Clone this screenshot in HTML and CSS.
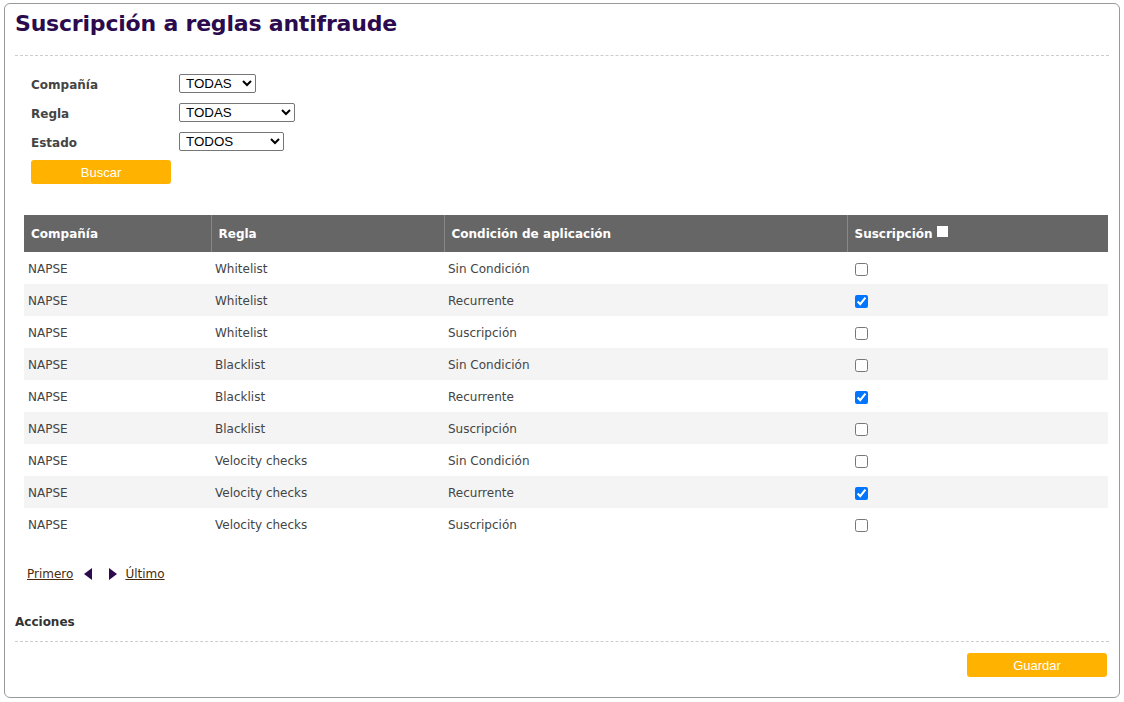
FILE: index.html
```html
<!DOCTYPE html>
<html lang="es">
<head>
<meta charset="utf-8">
<title>Suscripción a reglas antifraude</title>
<link rel="stylesheet" href="styles.css">
</head>
<body>
<div class="panel">
  <h1 class="title">Suscripción a reglas antifraude</h1>
  <hr class="dash">
  <div class="filters">
    <div class="frow"><label class="flabel">Compañía</label><select class="sel sel-c"><option>TODAS</option></select></div>
    <div class="frow"><label class="flabel">Regla</label><select class="sel sel-r"><option>TODAS</option></select></div>
    <div class="frow"><label class="flabel">Estado</label><select class="sel sel-e"><option>TODOS</option></select></div>
    <button class="btn btn-buscar">Buscar</button>
  </div>
  <table class="grid">
    <thead>
      <tr>
        <th class="c1">Compañía</th>
        <th class="c2">Regla</th>
        <th class="c3">Condición de aplicación</th>
        <th class="c4">Suscripción <span class="hbox"></span></th>
      </tr>
    </thead>
    <tbody>
      <tr><td>NAPSE</td><td>Whitelist</td><td>Sin Condición</td><td><input type="checkbox" class="chk"></td></tr>
      <tr><td>NAPSE</td><td>Whitelist</td><td>Recurrente</td><td><input type="checkbox" class="chk" checked></td></tr>
      <tr><td>NAPSE</td><td>Whitelist</td><td>Suscripción</td><td><input type="checkbox" class="chk"></td></tr>
      <tr><td>NAPSE</td><td>Blacklist</td><td>Sin Condición</td><td><input type="checkbox" class="chk"></td></tr>
      <tr><td>NAPSE</td><td>Blacklist</td><td>Recurrente</td><td><input type="checkbox" class="chk" checked></td></tr>
      <tr><td>NAPSE</td><td>Blacklist</td><td>Suscripción</td><td><input type="checkbox" class="chk"></td></tr>
      <tr><td>NAPSE</td><td>Velocity checks</td><td>Sin Condición</td><td><input type="checkbox" class="chk"></td></tr>
      <tr><td>NAPSE</td><td>Velocity checks</td><td>Recurrente</td><td><input type="checkbox" class="chk" checked></td></tr>
      <tr><td>NAPSE</td><td>Velocity checks</td><td>Suscripción</td><td><input type="checkbox" class="chk"></td></tr>
    </tbody>
  </table>
  <div class="pager">
    <a href="#" class="plink">Primero</a>
    <span class="tri tri-l"></span>
    <span class="tri tri-r"></span>
    <a href="#" class="plink">Último</a>
  </div>
  <div class="actions-title">Acciones</div>
  <hr class="dash dash2">
  <div class="actions">
    <button class="btn btn-guardar">Guardar</button>
  </div>
</div>
</body>
</html>
```

FILE: styles.css
```css
html, body {
  margin: 0;
  padding: 0;
  background: #fff;
}
body {
  padding: 3px 4px 0 4px;
  font-family: "DejaVu Sans", Verdana, sans-serif;
  color: #333;
}
.panel {
  border: 1px solid #999;
  border-radius: 6px;
  height: 695px;
  box-sizing: border-box;
  padding: 0 10px 0 10px;
}
.title {
  margin: 0;
  padding-top: 6px;
  font-size: 22px;
  line-height: 28px;
  font-weight: bold;
  color: #2b0a4d;
  letter-spacing: -0.2px;
}
.dash {
  border: 0;
  border-top: 1px dashed #ccc;
  margin: 17px 0 0 0;
  height: 0;
}
.filters {
  padding: 18px 0 0 16px;
}
.frow {
  display: flex;
  align-items: center;
  height: 18px;
  margin-bottom: 11px;
}
.flabel {
  width: 148px;
  font-size: 12px;
  font-weight: bold;
  color: #444;
  padding-top: 3px;
}
.sel {
  font-family: "Liberation Sans", Arial, sans-serif;
  font-size: 13.33px;
  height: 19px;
  border: 1px solid #767676;
  border-radius: 2px;
  background: #fff;
  color: #000;
  padding: 0 0 0 2px;
}
.sel-c { width: 77px; }
.sel-r { width: 116px; }
.sel-e { width: 105px; }
.btn {
  background: #ffb300;
  color: #fff;
  border: 0;
  border-radius: 3px;
  font-family: "Liberation Sans", Arial, sans-serif;
  font-size: 13px;
  width: 140px;
  height: 24px;
  padding: 0;
}
.btn-buscar {
  margin-top: -1px;
  display: block;
}
.grid {
  margin: 31px 0 0 9px;
  width: 1084px;
  border-collapse: collapse;
  font-size: 12px;
}
.grid th {
  background: #666;
  color: #fff;
  text-align: left;
  font-size: 12px;
  font-weight: bold;
  height: 37px;
  padding: 0 0 0 7px;
  border-left: 1px solid #888;
  box-sizing: border-box;
}
.grid th:first-child { border-left: 0; }
.grid th.c1 { width: 187px; }
.grid th.c2 { width: 233px; }
.grid th.c3 { width: 403px; }
.hbox {
  display: inline-block;
  width: 11px;
  height: 11px;
  background: #fff;
  vertical-align: 1px;
}
.grid td {
  height: 32px;
  padding: 1px 0 0 4px;
  box-sizing: border-box;
  color: #444;
}
.grid tbody tr:nth-child(even) td { background: #f4f4f4; }
.chk {
  margin: 0 0 0 4px;
  width: 13px;
  height: 13px;
  vertical-align: middle;
  accent-color: #0075ff;
}
.pager {
  display: flex;
  align-items: center;
  margin: 26px 0 0 12px;
  font-size: 12px;
  height: 16px;
}
.plink {
  color: #4a2a0a;
  text-decoration: underline;
}
.tri {
  width: 0;
  height: 0;
  border-top: 6px solid transparent;
  border-bottom: 6px solid transparent;
}
.tri-l {
  border-right: 8px solid #2b0a4d;
  margin-left: 11px;
}
.tri-r {
  border-left: 8px solid #2b0a4d;
  margin-left: 17px;
  margin-right: 8px;
}
.actions-title {
  margin-top: 33px;
  font-size: 12px;
  font-weight: bold;
  color: #333;
}
.dash2 {
  margin-top: 12px;
}
.actions {
  display: flex;
  justify-content: flex-end;
  padding: 11px 2px 0 0;
}
```
